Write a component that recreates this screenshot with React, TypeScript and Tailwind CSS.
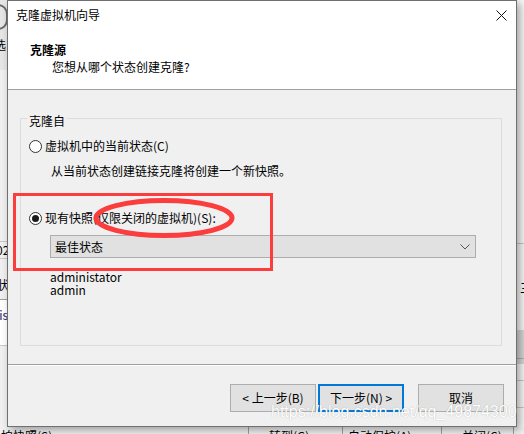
import React from "react";

const Radio = ({ checked }: { checked?: boolean }) => (
  <span className="w-[13px] h-[13px] rounded-full border border-[#333333] bg-white flex items-center justify-center shrink-0">
    {checked && <span className="w-[7px] h-[7px] rounded-full bg-[#1a1a1a]" />}
  </span>
);

export default function App() {
  return (
    <div className="relative w-[524px] h-[434px] overflow-hidden bg-[#f0f0f0] font-['Noto_Sans_CJK_SC','Noto_Sans',sans-serif] text-[12px] text-black">
      {/* background application pieces */}
      <div className="absolute left-0 top-0 w-[8px] h-[70px] bg-[#e6e6e6]" />
      <div className="absolute left-[-12px] top-[4px] w-[20px] h-[26px] rounded-full border-2 border-[#6a6a6a]" />
      <div className="absolute left-[-6px] top-[37px] text-[12px] leading-[16px]">选</div>
      <div className="absolute left-0 top-[241px] w-[8px] h-px bg-[#c8c8c8]" />
      <div className="absolute left-[-4px] top-[242px] text-[12px] leading-[16px]">02</div>
      <div className="absolute left-0 top-[258px] w-[8px] h-px bg-[#c8c8c8]" />
      <div className="absolute left-[-3px] top-[277px] text-[12px] leading-[16px]">状</div>
      <div className="absolute left-0 top-[299px] w-[8px] h-[46px] bg-white border-t border-[#a0a0a0]" />
      <div className="absolute left-[-8px] top-[308px] text-[12px] leading-[13px] text-[#1a1a60]">nis<br />n</div>
      <div className="absolute left-0 top-[345px] w-[8px] h-px bg-[#c8c8c8]" />

      <div className="absolute left-[516px] top-0 w-[8px] h-[434px] bg-[#f7f7f7]" />
      <div className="absolute left-[516px] top-[243px] w-[8px] h-px bg-[#c8c8c8]" />
      <div className="absolute left-[520px] top-[280px] text-[12px] leading-[16px]">三</div>
      <div className="absolute left-[516px] top-[330px] w-[8px] h-[34px] bg-[#d6d6d6]" />
      <div className="absolute left-[516px] top-[358px] w-[8px] h-px bg-[#b0b0b0]" />
      <div className="absolute left-[516px] top-[380px] w-[8px] h-px bg-[#c8c8c8]" />
      <div className="absolute left-[516px] top-[407px] w-[8px] h-px bg-[#c8c8c8]" />

      {/* bottom strip */}
      <div className="absolute left-0 top-[427px] w-[524px] h-[7px] bg-[#f0f0f0] flex text-[12px] leading-[16px]">
        <div className="w-[248px] pl-[1px] pt-[1px]">拍快照(S)</div>
        <div className="w-[94px] border-l border-[#a0a0a0] pl-[20px] pt-[1px]">转到(G)</div>
        <div className="w-[99px] border-l border-[#a0a0a0] pl-[5px] pt-[1px]">自动保护(A)</div>
        <div className="w-[72px] border-l border-[#a0a0a0] pl-[20px] pt-[1px]">关闭(C)</div>
        <div className="flex-1 border-l border-[#a0a0a0]" />
      </div>

      {/* dialog window */}
      <div className="absolute left-[7px] top-0 w-[510px] h-[427px] border border-[#707070] bg-[#f0f0f0] flex flex-col shadow-[3px_3px_8px_rgba(0,0,0,0.35)]">
        {/* header */}
        <div className="h-[89px] bg-white border-b border-[#a0a0a0] flex flex-col shrink-0">
          <div className="h-[28px] flex items-center justify-between pl-[8px] pr-[9px]">
            <span className="leading-[16px]">克隆虚拟机向导</span>
            <svg width="11" height="11" viewBox="0 0 11 11">
              <path d="M0.5 0.5 L10.5 10.5 M10.5 0.5 L0.5 10.5" stroke="#111" strokeWidth="1" />
            </svg>
          </div>
          <div className="mt-[13px] pl-[22px] leading-[16px] h-[16px] font-bold">克隆源</div>
          <div className="mt-[1px] pl-[44px] leading-[16px] h-[16px]">您想从哪个状态创建克隆?</div>
        </div>

        {/* body */}
        <div className="flex-1 flex flex-col">
          <div className="mt-[28px] ml-[12px] w-[482px] h-[228px] border border-[#dcdcdc] relative flex flex-col">
            <span className="absolute left-[6px] top-[-6px] px-[2px] bg-[#f0f0f0] leading-[16px]">克隆自</span>
            <div className="mt-[19px] ml-[8px] h-[16px] flex items-center gap-[3px]">
              <Radio />
              <span className="leading-[16px]">虚拟机中的当前状态(C)</span>
            </div>
            <div className="mt-[9px] ml-[30px] h-[16px] leading-[16px]">从当前状态创建链接克隆将创建一个新快照。</div>
            <div className="mt-[31px] ml-[8px] h-[16px] flex items-center gap-[3px]">
              <Radio checked />
              <span className="leading-[16px]">现有快照(仅限关闭的虚拟机)(S):</span>
            </div>
            <div className="mt-[9px] ml-[29px] w-[426px] h-[23px] bg-[#e1e1e1] border border-[#adadad] flex items-center justify-between pl-[4px] pr-[5px]">
              <span className="leading-[16px]">最佳状态</span>
              <svg width="10" height="6" viewBox="0 0 10 6">
                <path d="M0.5 0.5 L5 5 L9.5 0.5" fill="none" stroke="#555" strokeWidth="1" />
              </svg>
            </div>
            <div className="mt-[12px] ml-[29px] leading-[13px] text-[12px]">
              <div>administator</div>
              <div>admin</div>
            </div>
          </div>
        </div>

        {/* footer */}
        <div className="h-px bg-[#a0a0a0] shrink-0" />
        <div className="h-px bg-white shrink-0" />
        <div className="h-[60px] shrink-0 flex items-start justify-end pt-[18px] pr-[12px]">
          <button className="w-[86px] h-[28px] bg-[#e1e1e1] border border-[#adadad] flex items-center justify-center leading-[16px]">
            &lt; 上一步(B)
          </button>
          <button className="ml-[2px] w-[86px] h-[28px] bg-[#e1e1e1] border-2 border-[#0078d7] flex items-center justify-center leading-[16px]">
            下一步(N) &gt;
          </button>
          <button className="ml-[14px] w-[86px] h-[28px] bg-[#e1e1e1] border border-[#adadad] flex items-center justify-center leading-[16px]">
            取消
          </button>
        </div>
      </div>

      {/* annotations */}
      <div className="absolute left-[13px] top-[193px] w-[260px] h-[78px] border-[3px] border-[#fc3d3d]" />
      <svg className="absolute left-[90px] top-[195px]" width="148" height="46" viewBox="0 0 148 46">
        <ellipse cx="74" cy="23" rx="68" ry="17.5" fill="none" stroke="#fc3d3d" strokeWidth="5" />
      </svg>

      {/* watermark */}
      <div className="absolute left-[271px] top-[403px] font-['Liberation_Sans',sans-serif] text-[16px] leading-[18px] text-white [text-shadow:0_0_1px_rgba(0,0,0,0.3)]">
        https://blog.csdn.net/qq_49874300
      </div>
    </div>
  );
}
